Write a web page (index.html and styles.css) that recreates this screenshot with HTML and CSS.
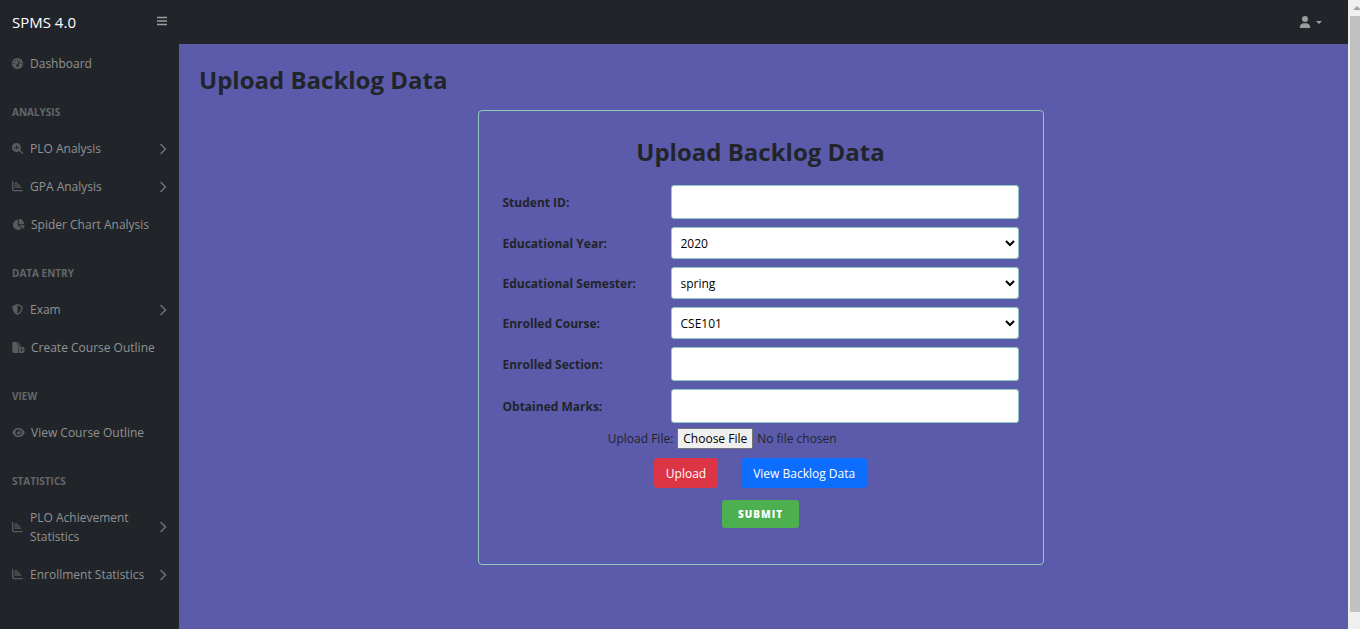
FILE: index.html
```html
<!DOCTYPE html>
<html lang="en">
<head>
<meta charset="utf-8">
<title>SPMS 4.0</title>
<link rel="stylesheet" href="styles.css">
</head>
<body>
<svg class="defs" aria-hidden="true">
  <symbol id="bars" viewBox="0 0 10 10"><path d="M0 1.500h10M0 5h10M0 8.500h10" fill="none" stroke="currentColor" stroke-width="1.500"/></symbol>
  <symbol id="user" viewBox="0 0 448 512"><path d="M224 256A128 128 0 1 0 224 0a128 128 0 1 0 0 256zm-45.700 48C79.800 304 0 383.800 0 482.300C0 498.700 13.300 512 29.700 512H418.300c16.400 0 29.700-13.300 29.700-29.700C448 383.800 368.200 304 269.700 304H178.300z"/></symbol>
  <symbol id="caret" viewBox="0 0 6 3"><path d="M0 0h6L3 3z"/></symbol>
  <symbol id="angle" viewBox="0 0 8 12"><path d="M2 1.500L6.500 6l-4.500 4.500" fill="none" stroke="currentColor" stroke-width="1.500" stroke-linecap="round" stroke-linejoin="round"/></symbol>
  <symbol id="gauge" viewBox="0 0 512 512"><path fill-rule="evenodd" d="M0 256a256 256 0 1 1 512 0A256 256 0 1 1 0 256zM288 96a32 32 0 1 0-64 0a32 32 0 1 0 64 0zM256 416c35.300 0 64-28.700 64-64c0-17.400-6.900-33.100-18.100-44.600L366 161.700c5.300-12.100-.2-26.300-12.300-31.600s-26.300 .2-31.600 12.300L257.900 288c-.6 0-1.300 0-1.900 0c-35.300 0-64 28.700-64 64s28.700 64 64 64zM176 144a32 32 0 1 0-64 0a32 32 0 1 0 64 0zM96 288a32 32 0 1 0 0-64a32 32 0 1 0 0 64zm352-32a32 32 0 1 0-64 0a32 32 0 1 0 64 0z"/></symbol>
  <symbol id="search-chart" viewBox="0 0 512 512"><path fill-rule="evenodd" d="M416 208c0 45.900-14.900 88.300-40 122.700L502.600 457.400c12.500 12.500 12.500 32.800 0 45.300s-32.800 12.500-45.300 0L330.700 376c-34.400 25.200-76.800 40-122.700 40C93.100 416 0 322.900 0 208S93.100 0 208 0S416 93.100 416 208zM104 208v64c0 13 11 24 24 24s24-11 24-24v-64c0-13-11-24-24-24s-24 11-24 24zm80-96v160c0 13 11 24 24 24s24-11 24-24V112c0-13-11-24-24-24s-24 11-24 24zm80 64v96c0 13 11 24 24 24s24-11 24-24v-96c0-13-11-24-24-24s-24 11-24 24z"/></symbol>
  <symbol id="bar-chart" viewBox="0 0 512 512"><path d="M32 32v368c0 30 18 48 48 48h400M136 96h110M136 192h210M136 288h270" fill="none" stroke="currentColor" stroke-width="62" stroke-linecap="round"/></symbol>
  <symbol id="pie" viewBox="0 0 576 512"><path d="M304 240V16.600c0-9 7-16.600 16-16.600C443.700 0 544 100.300 544 224c0 9-7.600 16-16.600 16H304zM32 272C32 150.700 122.100 50.300 239 34.300c9.200-1.300 17 6.100 17 15.400V288L412.500 444.500c6.700 6.700 6.200 17.700-1.500 23.100C371.800 495.600 323.800 512 272 512C139.500 512 32 404.600 32 272zm526.400 16c9.300 0 16.600 7.800 15.400 17c-7.700 55.900-34.600 105.600-73.900 142.300c-6 5.600-15.400 5.200-21.200-.7L320 288H558.400z"/></symbol>
  <symbol id="shield" viewBox="0 0 512 512"><path fill-rule="evenodd" d="M256 0c4.600 0 9.200 1 13.400 2.900L457.700 82.800c22 9.300 38.400 31 38.300 57.200c-.5 99.200-41.300 280.700-213.600 363.200c-16.700 8-36.100 8-52.800 0C57.300 420.700 16.500 239.200 16 140c-.1-26.200 16.300-47.900 38.300-57.200L242.700 2.900C246.800 1 251.400 0 256 0zm0 66.800V444.800C394 378 431.100 230.100 432 141.400L256 66.800z"/></symbol>
  <symbol id="file-plus" viewBox="0 0 576 512"><path fill-rule="evenodd" d="M0 64C0 28.700 28.700 0 64 0H224V128c0 17.700 14.300 32 32 32H384v38.600C310 219 256 287 256 368c0 59 28.600 111.400 72.700 143.500H64c-35.300 0-64-28.700-64-64V64zM256 0L384 128H256V0zM288 368a144 144 0 1 1 288 0a144 144 0 1 1-288 0zm128-80v64h-64v32h64v64h32v-64h64v-32h-64v-64z"/></symbol>
  <symbol id="eye" viewBox="0 0 576 512"><path fill-rule="evenodd" d="M288 32c-80.800 0-145.500 36.800-192.600 80.600C48.600 156 17.300 208 2.500 243.700c-3.300 7.900-3.300 16.700 0 24.600C17.300 304 48.600 356 95.400 399.400C142.500 443.200 207.200 480 288 480s145.500-36.800 192.600-80.600c46.800-43.500 78.100-95.400 93-131.100c3.300-7.900 3.300-16.700 0-24.600c-14.900-35.700-46.200-87.700-93-131.100C433.500 68.800 368.800 32 288 32zM144 256a144 144 0 1 1 288 0a144 144 0 1 1-288 0zm144-64c0 35.300-28.700 64-64 64c-7 0-14-1-20-3c-6-2-12 2-12 8a96 96 0 1 0 96-101c-6 0-10 6-8 12c5 6 8 13 8 20z"/></symbol>
</svg>
<div class="app">
  <header class="topbar">
    <div class="brand-box">
      <a class="brand" href="#">SPMS 4.0</a>
      <button class="plain toggle" type="button" aria-label="Toggle menu"><svg class="icon-bars"><use href="#bars"/></svg></button>
    </div>
    <button class="plain account" type="button" aria-label="Account"><svg class="icon-user"><use href="#user"/></svg><svg class="icon-caret"><use href="#caret"/></svg></button>
  </header>
  <div class="body">
    <nav class="sidebar">
      <a class="item" href="#"><svg class="icon"><use href="#gauge"/></svg><span class="text">Dashboard</span></a>
      <h2 class="section">ANALYSIS</h2>
      <a class="item" href="#"><svg class="icon"><use href="#search-chart"/></svg><span class="text">PLO Analysis</span><svg class="angle"><use href="#angle"/></svg></a>
      <a class="item" href="#"><svg class="icon"><use href="#bar-chart"/></svg><span class="text">GPA Analysis</span><svg class="angle"><use href="#angle"/></svg></a>
      <a class="item" href="#"><svg class="icon wide"><use href="#pie"/></svg><span class="text">Spider Chart Analysis</span></a>
      <h2 class="section">DATA ENTRY</h2>
      <a class="item" href="#"><svg class="icon"><use href="#shield"/></svg><span class="text">Exam</span><svg class="angle"><use href="#angle"/></svg></a>
      <a class="item" href="#"><svg class="icon wide"><use href="#file-plus"/></svg><span class="text">Create Course Outline</span></a>
      <h2 class="section">VIEW</h2>
      <a class="item" href="#"><svg class="icon wide"><use href="#eye"/></svg><span class="text">View Course Outline</span></a>
      <h2 class="section">STATISTICS</h2>
      <a class="item" href="#"><svg class="icon"><use href="#bar-chart"/></svg><span class="text">PLO Achievement Statistics</span><svg class="angle"><use href="#angle"/></svg></a>
      <a class="item" href="#"><svg class="icon"><use href="#bar-chart"/></svg><span class="text">Enrollment Statistics</span><svg class="angle"><use href="#angle"/></svg></a>
    </nav>
    <main class="content">
      <h1 class="title">Upload Backlog Data</h1>
      <form class="card">
        <h2 class="title card-title">Upload Backlog Data</h2>
        <div class="fields">
          <div class="field"><label for="student">Student ID:</label><input class="control" id="student" type="text"></div>
          <div class="field"><label for="year">Educational Year:</label><select class="control" id="year"><option>2020</option></select></div>
          <div class="field"><label for="semester">Educational Semester:</label><select class="control" id="semester"><option>spring</option></select></div>
          <div class="field"><label for="course">Enrolled Course:</label><select class="control" id="course"><option>CSE101</option></select></div>
          <div class="field"><label for="section">Enrolled Section:</label><input class="control" id="section" type="text"></div>
          <div class="field"><label for="marks">Obtained Marks:</label><input class="control" id="marks" type="text"></div>
        </div>
        <div class="file-row"><label for="file">Upload File:</label><input class="file" id="file" type="file"></div>
        <div class="actions">
          <button class="btn red" type="button">Upload</button>
          <button class="btn blue" type="button">View Backlog Data</button>
        </div>
        <button class="submit" type="submit">SUBMIT</button>
      </form>
    </main>
  </div>
</div>
<div class="scrollbar" aria-hidden="true"><svg class="scroll-arrow" viewBox="0 0 7 4"><path d="M0 4L4 0L8 4z"/></svg><div class="thumb"></div></div>
</body>
</html>
```
FILE: styles.css
```css
* { box-sizing: border-box; }
body {
  margin: 0;
  display: flex;
  min-height: 100vh;
  background: #5c5aab;
  color: #212529;
  font: 12px/19px "Open Sans", "Segoe UI", sans-serif;
}
button, input, select { font: inherit; }
a { text-decoration: none; }
svg { fill: currentColor; flex: none; }
.defs { display: none; }
.app { flex: 1; display: flex; flex-direction: column; }

.topbar {
  display: flex;
  align-items: center;
  justify-content: space-between;
  height: 44px;
  background: #212529;
  padding-right: 26px;
}
.brand-box {
  display: flex;
  align-items: center;
  justify-content: space-between;
  width: 179px;
  padding: 0 12px;
}
.brand { color: #fff; font-size: 15px; line-height: 24px; }
.plain {
  display: flex;
  align-items: center;
  padding: 0;
  border: 0;
  background: none;
  color: #9b9d9f;
}
.icon-bars { width: 10px; height: 10px; }
.toggle { padding-bottom: 2px; }
.account { gap: 5px; }
.icon-user { width: 12px; height: 12px; }
.icon-caret { width: 6px; height: 3px; }

.body { flex: 1; display: flex; }
.sidebar { width: 179px; flex: none; padding-top: 1px; background: #212529; }
.item {
  display: flex;
  align-items: center;
  gap: 7px;
  padding: 9px 12px 10px;
  color: #909294;
}
.icon { width: 11px; height: 11px; color: #595c5f; }
.wide { width: 13px; height: 11px; margin-right: -1px; }
.text { flex: 1; }
.angle { width: 8px; height: 12px; color: #6f7275; }
.section {
  margin: 0;
  padding: 22px 12px 11px;
  color: #64676a;
  font-size: 10px;
  line-height: 14px;
}

.content { flex: 1; padding: 20px 26px 20px 20px; }
.title { margin: 0; font-size: 24px; line-height: 32px; font-weight: 700; }
.card {
  display: flex;
  flex-direction: column;
  align-items: center;
  max-width: 566px;
  margin: 14px auto 0;
  padding: 25px 24px 36px;
  border: 1px solid #8fcabf;
  border-radius: 4px;
}
.card-title { margin-bottom: 17px; }
.fields { display: flex; flex-direction: column; gap: 8px; width: 100%; }
.field { display: flex; align-items: center; }
.field label { width: 168px; font-weight: 700; }
.control {
  flex: 1;
  height: 34px;
  padding: 0 10px;
  border: 1px solid #8fcabf;
  border-radius: 3px;
  background: #fff;
  color: #000;
}
select.control { height: 32px; padding: 0 5px; }
.file-row { display: flex; align-items: center; gap: 4px; margin-top: 5px; }
.file { width: 236px; height: 21px; line-height: 19px; }
.file::file-selector-button {
  height: 21px;
  margin: 0 4px 0 0;
  padding: 0 5px;
  border: 1px solid #767676;
  background: #efefef;
  color: #000;
  font: inherit;
}
.actions { display: flex; gap: 23px; margin-top: 9px; }
.btn {
  height: 30px;
  padding: 0 12px;
  border: 0;
  border-radius: 4px;
  color: #fff;
}
.red { background: #dc3545; }
.blue { background: #0d6efd; }
.submit {
  height: 28px;
  margin-top: 12px;
  padding: 0 16px;
  border: 0;
  border-radius: 3px;
  background: #4caf50;
  color: #fff;
  font-size: 10px;
  font-weight: 800;
  letter-spacing: 1px;
}

.scrollbar {
  display: flex;
  flex-direction: column;
  width: 12px;
  padding: 6px 0 17px 2px;
  background: #f0f0f0;
}
.scroll-arrow { width: 7px; height: 4px; margin: 0 0 6px 3px; fill: #a3a3a3; }
.thumb { flex: 1; background: #c1c1c1; }
```
